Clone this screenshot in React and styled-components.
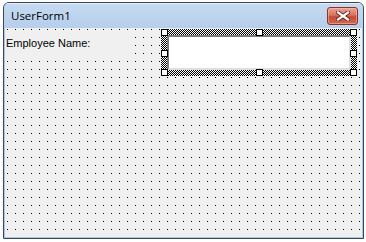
import React from 'react'
import styled, { createGlobalStyle } from 'styled-components'

const GlobalStyle = createGlobalStyle`
  html, body {
    margin: 0;
    padding: 0;
    background: #fff;
  }
  body {
    font-family: "Liberation Sans", Arial, sans-serif;
  }
`

const Page = styled.div`
  padding: 2px 0 0 3px;
`

const Window = styled.div`
  width: 361px;
  height: 237px;
  box-sizing: border-box;
  border: 1px solid #3d4654;
  border-radius: 6px 6px 0 0;
  background: #a9c7ea;
  display: flex;
  flex-direction: column;
  overflow: hidden;
`

const TitleBar = styled.div`
  height: 25px;
  flex: none;
  display: flex;
  align-items: flex-start;
  justify-content: space-between;
  padding: 0 5px 0 7px;
  background: linear-gradient(#c6dbf1, #b5ceeb);
  box-shadow: inset 0 1px 0 #e4eef9;
`

const Title = styled.span`
  font-family: "Open Sans", "Noto Sans", sans-serif;
  font-size: 11.5px;
  line-height: 25px;
  color: #000;
`

const CloseButton = styled.div`
  margin-top: 4px;
  width: 31px;
  height: 18px;
  box-sizing: border-box;
  border: 1px solid #8a3128;
  border-radius: 3px;
  background: linear-gradient(#e9a393 0%, #d8735f 45%, #c54a35 55%, #cf6a4f 100%);
  box-shadow: inset 0 0 0 1px rgba(255, 210, 200, 0.45);
  display: flex;
  align-items: center;
  justify-content: center;
`

const Client = styled.div`
  flex: 1;
  margin: 0 1px 1px 1px;
  padding-top: 1px;
  display: flex;
  align-items: flex-start;
  background-color: #f0f0f0;
  background-image:
    linear-gradient(90deg, transparent 1px, #f0f0f0 1px),
    linear-gradient(#000 1px, transparent 1px);
  background-size: 8px 8px, 8px 8px;
  background-position: 2px 1px, 2px 1px;
`

const Label = styled.div`
  margin-top: 4px;
  width: 126px;
  height: 25px;
  box-sizing: border-box;
  padding: 4px 0 0 1px;
  background: #f0f0f0;
  font-size: 11px;
  line-height: 13px;
  color: #000;
`

const Selection = styled.div`
  position: relative;
  margin-left: 30px;
  width: 196px;
  height: 47px;
  box-sizing: border-box;
  padding: 6px;
  background: repeating-conic-gradient(#000 0 25%, #fff 0 50%) 0 0 / 2px 2px;
`

const TextBox = styled.div`
  width: 100%;
  height: 100%;
  box-sizing: border-box;
  background: #fff;
  border: 2px solid;
  border-color: #7c7c7c #dedede #dedede #7c7c7c;
`

const pos = { start: '0', mid: 'calc(50% - 3px)', end: 'calc(100% - 7px)' }

const Handle = styled.span`
  position: absolute;
  left: ${(p) => pos[p.$x]};
  top: ${(p) => pos[p.$y]};
  width: 7px;
  height: 7px;
  box-sizing: border-box;
  border: 1px solid #000;
  background: #fff;
`

const handles = [
  ['start', 'start'], ['mid', 'start'], ['end', 'start'],
  ['start', 'mid'], ['end', 'mid'],
  ['start', 'end'], ['mid', 'end'], ['end', 'end'],
]

function CloseIcon() {
  return (
    <svg width="14" height="10" viewBox="0 0 14 10">
      <path d="M2 1.5 L12 8.5 M12 1.5 L2 8.5" stroke="#6b2118" strokeWidth="4" strokeLinecap="square" />
      <path d="M2 1.5 L12 8.5 M12 1.5 L2 8.5" stroke="#fff" strokeWidth="2.2" strokeLinecap="square" />
    </svg>
  )
}

export default function App() {
  return (
    <Page>
      <GlobalStyle />
      <Window>
        <TitleBar>
          <Title>UserForm1</Title>
          <CloseButton>
            <CloseIcon />
          </CloseButton>
        </TitleBar>
        <Client>
          <Label>Employee Name:</Label>
          <Selection>
            <TextBox />
            {handles.map(([x, y]) => (
              <Handle key={x + y} $x={x} $y={y} />
            ))}
          </Selection>
        </Client>
      </Window>
    </Page>
  )
}
